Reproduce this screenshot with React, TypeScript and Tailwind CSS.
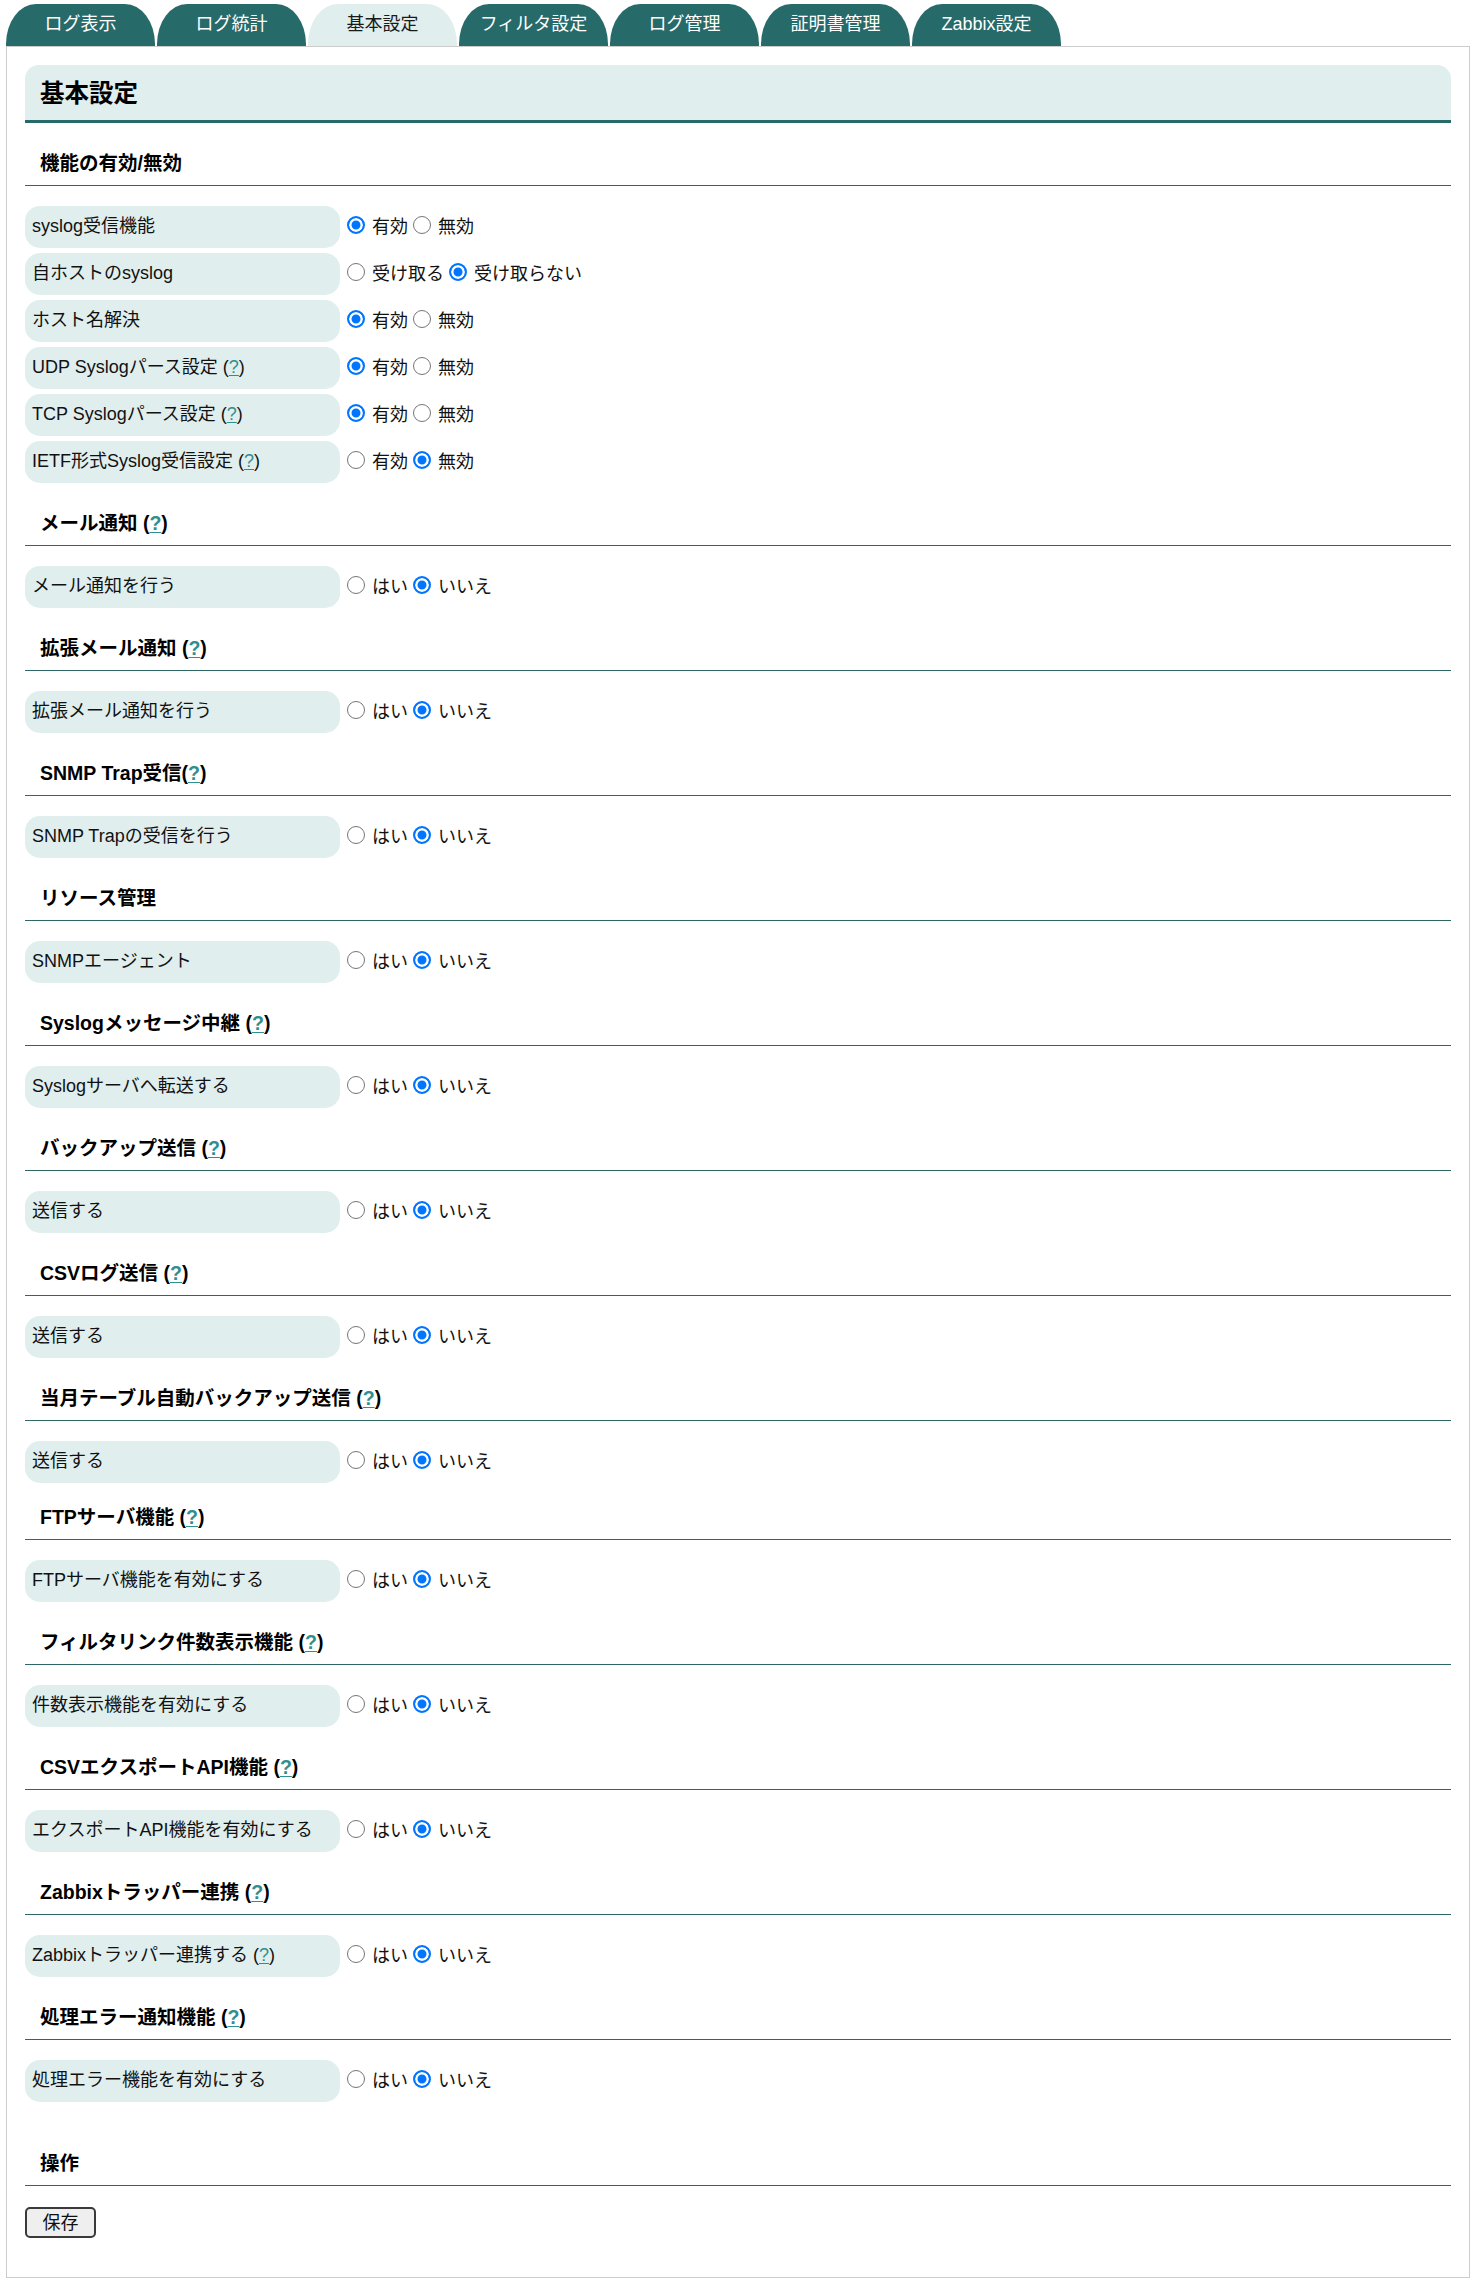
import type { ReactNode } from "react";

type RowDef = {
  label: ReactNode;
  options: string[];
  checked: number;
};

type SectionDef = {
  title: ReactNode;
  rows: RowDef[];
  pt?: string;
};

const Help = ({ bold = false }: { bold?: boolean }) => (
  <a
    href="#"
    className={
      bold
        ? "font-bold text-[#2f8f8f] underline underline-offset-2"
        : "text-[#2f8f8f] underline underline-offset-2"
    }
  >
    ?
  </a>
);

const YES_NO = ["はい", "いいえ"];
const ON_OFF = ["有効", "無効"];

const tabs = ["ログ表示", "ログ統計", "基本設定", "フィルタ設定", "ログ管理", "証明書管理", "Zabbix設定"];

const sections: SectionDef[] = [
  {
    title: "機能の有効/無効",
    rows: [
      { label: "syslog受信機能", options: ON_OFF, checked: 0 },
      { label: "自ホストのsyslog", options: ["受け取る", "受け取らない"], checked: 1 },
      { label: "ホスト名解決", options: ON_OFF, checked: 0 },
      {
        label: (
          <>
            UDP Syslogパース設定 (<Help />)
          </>
        ),
        options: ON_OFF,
        checked: 0,
      },
      {
        label: (
          <>
            TCP Syslogパース設定 (<Help />)
          </>
        ),
        options: ON_OFF,
        checked: 0,
      },
      {
        label: (
          <>
            IETF形式Syslog受信設定 (<Help />)
          </>
        ),
        options: ON_OFF,
        checked: 1,
      },
    ],
  },
  {
    title: (
      <>
        メール通知 (<Help bold />)
      </>
    ),
    rows: [{ label: "メール通知を行う", options: YES_NO, checked: 1 }],
  },
  {
    title: (
      <>
        拡張メール通知 (<Help bold />)
      </>
    ),
    rows: [{ label: "拡張メール通知を行う", options: YES_NO, checked: 1 }],
  },
  {
    title: (
      <>
        SNMP Trap受信(<Help bold />)
      </>
    ),
    rows: [{ label: "SNMP Trapの受信を行う", options: YES_NO, checked: 1 }],
  },
  {
    title: "リソース管理",
    rows: [{ label: "SNMPエージェント", options: YES_NO, checked: 1 }],
  },
  {
    title: (
      <>
        Syslogメッセージ中継 (<Help bold />)
      </>
    ),
    rows: [{ label: "Syslogサーバへ転送する", options: YES_NO, checked: 1 }],
  },
  {
    title: (
      <>
        バックアップ送信 (<Help bold />)
      </>
    ),
    rows: [{ label: "送信する", options: YES_NO, checked: 1 }],
  },
  {
    title: (
      <>
        CSVログ送信 (<Help bold />)
      </>
    ),
    rows: [{ label: "送信する", options: YES_NO, checked: 1 }],
  },
  {
    title: (
      <>
        当月テーブル自動バックアップ送信 (<Help bold />)
      </>
    ),
    rows: [{ label: "送信する", options: YES_NO, checked: 1 }],
  },
  {
    title: (
      <>
        FTPサーバ機能 (<Help bold />)
      </>
    ),
    rows: [{ label: "FTPサーバ機能を有効にする", options: YES_NO, checked: 1 }],
    pt: "pt-[22px]",
  },
  {
    title: (
      <>
        フィルタリンク件数表示機能 (<Help bold />)
      </>
    ),
    rows: [{ label: "件数表示機能を有効にする", options: YES_NO, checked: 1 }],
  },
  {
    title: (
      <>
        CSVエクスポートAPI機能 (<Help bold />)
      </>
    ),
    rows: [{ label: "エクスポートAPI機能を有効にする", options: YES_NO, checked: 1 }],
  },
  {
    title: (
      <>
        Zabbixトラッパー連携 (<Help bold />)
      </>
    ),
    rows: [
      {
        label: (
          <>
            Zabbixトラッパー連携する (<Help />)
          </>
        ),
        options: YES_NO,
        checked: 1,
      },
    ],
  },
  {
    title: (
      <>
        処理エラー通知機能 (<Help bold />)
      </>
    ),
    rows: [{ label: "処理エラー機能を有効にする", options: YES_NO, checked: 1 }],
  },
];

function SectionHeading({ children, pt = "pt-[28px]" }: { children: ReactNode; pt?: string }) {
  return (
    <h3
      className={`${pt} border-b border-[#2f6666] pb-[10px] pl-[15px] text-[19.5px] font-bold leading-[24px] text-black`}
    >
      {children}
    </h3>
  );
}

function SettingRow({ row, name }: { row: RowDef; name: string }) {
  return (
    <div className="flex h-[42px] items-center">
      <div className="flex h-full w-[315px] shrink-0 items-center rounded-[15px] bg-[#e0eeee] pb-[2px] pl-[7px] text-[18px] leading-[24px] text-[#111]">
        <span>{row.label}</span>
      </div>
      <div className="flex items-center text-[18px] leading-[24px] text-[#111]">
        {row.options.map((opt, i) => (
          <label key={opt} className={i === 0 ? "ml-[7px] flex items-center" : "ml-[5px] flex items-center"}>
            <input
              type="radio"
              name={name}
              defaultChecked={i === row.checked}
              className="mb-[4px] h-[18px] w-[18px] shrink-0 appearance-none rounded-full border-[1.5px] border-[#767676] bg-white checked:border-2 checked:border-[#0075ff] checked:bg-[#0075ff] checked:shadow-[inset_0_0_0_2.5px_#ffffff]"
            />
            <span className="ml-[7px] pb-[1px]">{opt}</span>
          </label>
        ))}
      </div>
    </div>
  );
}

export default function App() {
  return (
    <div className='min-h-screen w-[1480px] bg-white pt-[4px] font-["Liberation_Sans","Noto_Sans_CJK_JP",sans-serif] text-[#111]'>
      <nav className="ml-[6px] flex gap-[2px]">
        {tabs.map((tab) => {
          const active = tab === "基本設定";
          return (
            <a
              key={tab}
              href="#"
              className={
                active
                  ? "flex h-[42px] w-[149px] justify-center rounded-t-[30px_40px] bg-[#e0eeee] pt-[8px] text-[18px] leading-[24px] text-[#1a1a1a]"
                  : "flex h-[42px] w-[149px] justify-center rounded-t-[30px_40px] bg-[#266a6a] pt-[8px] text-[18px] leading-[24px] text-white"
              }
            >
              {tab}
            </a>
          );
        })}
      </nav>

      <div className="mb-[10px] ml-[6px] w-[1464px] border border-[#cccccc] px-[18px] pb-[39px] pt-[18px]">
        <h2 className="flex h-[58px] items-center rounded-t-[14px] border-b-[3px] border-[#266a6a] bg-[#e0eeee] pl-[15px] pt-[2px] text-[24.5px] font-bold leading-[30px] text-black">
          基本設定
        </h2>

        {sections.map((section, si) => (
          <section key={si}>
            <SectionHeading pt={section.pt}>{section.title}</SectionHeading>
            <div className="flex flex-col gap-[5px] pt-[20px]">
              {section.rows.map((row, ri) => (
                <SettingRow key={ri} row={row} name={`s${si}r${ri}`} />
              ))}
            </div>
          </section>
        ))}

        <SectionHeading pt="pt-[49px]">操作</SectionHeading>
        <div className="pt-[21px]">
          <button
            type="button"
            className="h-[31px] w-[71px] rounded-[5px] border-2 border-[#3a3a3a] bg-[#efefef] text-[18px] leading-[24px] text-[#111]"
          >
            保存
          </button>
        </div>
      </div>
    </div>
  );
}
